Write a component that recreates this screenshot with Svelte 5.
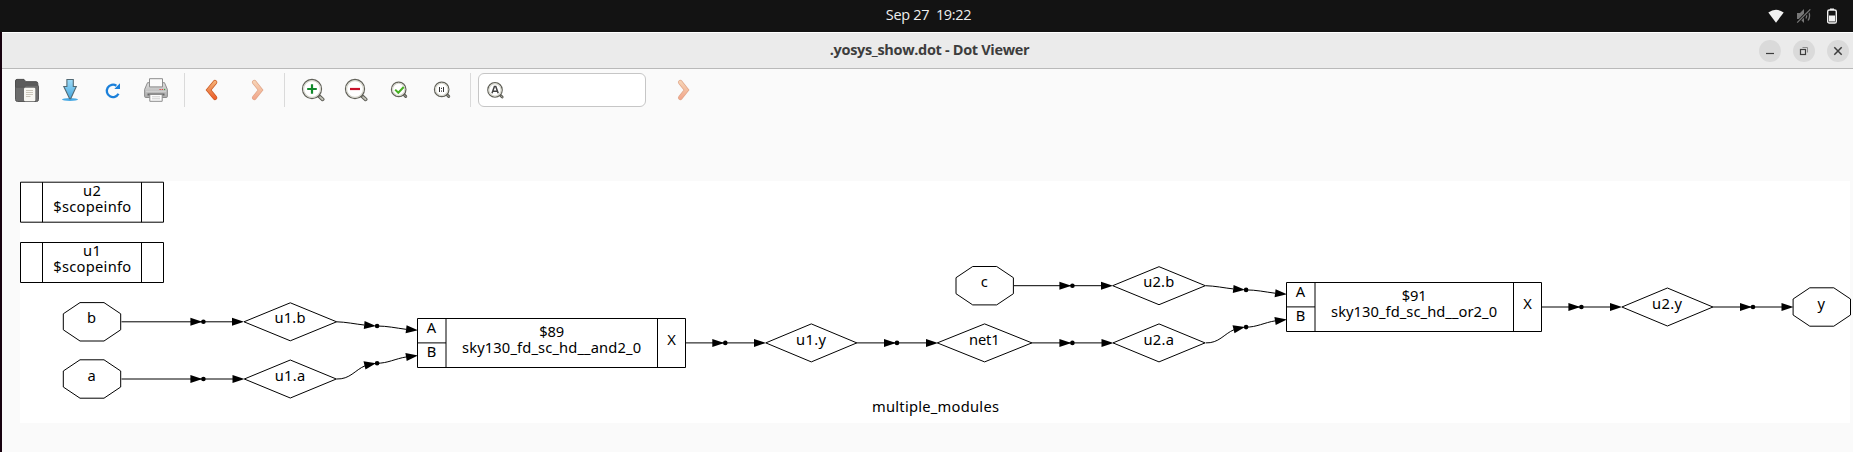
<script>
  const octagons = [
    { x: 92, y: 321.8, label: 'b', base: 323 },
    { x: 92, y: 379, label: 'a', base: 380.5 },
    { x: 984.7, y: 285.7, label: 'c', base: 287 },
    { x: 1821.8, y: 307, label: 'y', base: 309 }
  ];
  const diamonds = [
    { x: 290.3, y: 321.8, w: 46.3, label: 'u1.b', base: 323, len: 31 },
    { x: 290.3, y: 379, w: 46, label: 'u1.a', base: 380.5, len: 30.5 },
    { x: 811.3, y: 342.9, w: 45.5, label: 'u1.y', base: 344.6, len: 30 },
    { x: 984.6, y: 342.9, w: 47.3, label: 'net1', base: 344.6, len: 30.5 },
    { x: 1159, y: 285.7, w: 46.3, label: 'u2.b', base: 287, len: 31 },
    { x: 1159, y: 342.9, w: 46, label: 'u2.a', base: 344.6, len: 30.5 },
    { x: 1667.4, y: 307, w: 45.5, label: 'u2.y', base: 308.8, len: 30 }
  ];
  // start of line, dot centre, arrow tip at the target
  const edges = [
    { y: 321.8, from: 121.5, dot: 203.4, to: 244 },
    { y: 379, from: 121.5, dot: 203.4, to: 244.5 },
    { y: 342.9, from: 685.5, dot: 725.3, to: 766 },
    { y: 342.9, from: 856.5, dot: 897, to: 938 },
    { y: 342.9, from: 1031.5, dot: 1072.4, to: 1113.5 },
    { y: 285.7, from: 1014, dot: 1072.4, to: 1113 },
    { y: 307, from: 1541.5, dot: 1581.4, to: 1622 },
    { y: 307, from: 1712.5, dot: 1753, to: 1793.5 }
  ];
  const cells = [
    { x: 417.5, y: 318.5, right: 685.5, div: 657.5, id: '$89', name: 'sky130_fd_sc_hd__and2_0', len: 179 },
    { x: 1286.5, y: 282.5, right: 1541.5, div: 1513.5, id: '$91', name: 'sky130_fd_sc_hd__or2_0', len: 166 }
  ];
  const scopes = [
    { y: 182.2, h: 40, name: 'u2', b1: 196, b2: 211.5 },
    { y: 242.5, h: 40, name: 'u1', b1: 256, b2: 272 }
  ];
  const fans = [[0, 0], [869, -36.1]];
</script>

{#snippet lens(cx, cy, r, ex, ey, w)}
  <path d="M{cx + r * 0.75} {cy + r * 0.75}L{ex} {ey}" stroke="#5d5d56" stroke-width={w} stroke-linecap="round" />
  <path d="M{cx + r * 0.85} {cy + r * 0.85}L{ex} {ey}" stroke="#c2c2b8" stroke-width={w - 2} stroke-linecap="round" />
  <circle {cx} {cy} {r} fill="#fff" stroke="#62625a" stroke-width="1.3" />
  <circle {cx} {cy} r={r - 1.1} fill="none" stroke="#d5d5cb" stroke-width="1.1" />
{/snippet}

{#snippet chevron(d)}
  <path {d} fill="none" stroke="#c95a24" stroke-width="4.6" stroke-linecap="round" stroke-linejoin="miter" />
  <path {d} fill="none" stroke="url(#amber)" stroke-width="3.2" stroke-linecap="round" />
{/snippet}

<div class="desktop">
  <header class="panel">
    <span></span>
    <span class="clock">Sep 27&nbsp; 19:22</span>
    <div class="status">
      <svg width="16" height="16" viewBox="0 0 16 16"><path d="M.3 4.6Q8-1 15.7 4.6L8 14.7Z" fill="#f2f2f2" /></svg>
      <svg class="mute" width="16" height="16" viewBox="0 0 16 16">
        <path d="M1 5h3l4-4v14L4 11H1Z" fill="#777" />
        <path d="M10 5.5q1.4 2.5 0 5M12.3 3.5q2.7 4.5-.3 9" fill="none" stroke="#777" stroke-width="1.3" />
        <path d="M1 14.8L14.3 1.4" stroke="#131313" stroke-width="3" />
        <path d="M1.2 14.6L14.3 1.4" stroke="#777" stroke-width="1.3" />
      </svg>
      <svg width="10" height="16" viewBox="0 0 10 16">
        <path d="M3 .5h4v1.5H3Z" fill="#f2f2f2" />
        <rect x=".7" y="2" width="8.6" height="13" rx="1.6" fill="none" stroke="#f2f2f2" stroke-width="1.4" />
        <path d="M2 7.5h6V13.5H2Z" fill="#f2f2f2" />
      </svg>
    </div>
  </header>

  <main class="window">
    <div class="titlebar">
      <span></span>
      <span class="title">.yosys_show.dot - Dot Viewer</span>
      <div class="controls">
        <span class="ctl"><svg width="22" height="22"><path d="M7 13.5h8" stroke="#3d3d3d" stroke-width="1.2" /></svg></span>
        <span class="ctl"><svg width="22" height="22" fill="none"><rect x="7.5" y="9.5" width="5" height="5" stroke="#3d3d3d" stroke-width="1.2" /><path d="M9.5 7.5h5v5" stroke="#8c8c8c" /></svg></span>
        <span class="ctl"><svg width="22" height="22"><path d="M7.3 7.3l7.4 7.4M14.7 7.3l-7.4 7.4" stroke="#3d3d3d" stroke-width="1.5" /></svg></span>
      </div>
    </div>

    <div class="toolbar">
      <span class="tool">
        <svg width="24" height="24" viewBox="0 0 24 24">
          <path d="M.5 3Q.5 1.4 2 1.4h7l1.8 2.3H21q1.8 0 1.8 1.8v5H.5Z" fill="#5c5c5c" stroke="#4c4c4c" />
          <path d="M.5 9.2h8.8l1.9-2H22q1.5 0 1.5 1.6V21.5q0 2-2 2h-19q-2 0-2-2Z" fill="#6c6c6c" stroke="#585858" />
          <rect x="9" y="9.8" width="11.3" height="13.5" rx="1.2" fill="#f8f7f2" />
          <path d="M11 12.5h7M11 14.5h7M11 16.5h7M11 18.5h4.5" stroke="#c5c0b3" stroke-width=".9" />
        </svg>
      </span>
      <span class="tool">
        <svg width="24" height="24" viewBox="0 0 24 24">
          <defs><linearGradient id="sky" x2="0" y2="1"><stop stop-color="#9fdcf8" /><stop offset="1" stop-color="#43a6de" /></linearGradient></defs>
          <ellipse cx="12" cy="21.5" rx="8" ry="1.5" fill="#4aaae4" />
          <path d="M8.9 1.5h6.4v7h3l-5.6 12.3h-1.1L5.8 8.5h3.1Z" fill="url(#sky)" stroke="#526a75" stroke-width="1.1" />
        </svg>
      </span>
      <span class="tool">
        <svg width="24" height="24" viewBox="0 0 24 24">
          <path d="M15.4 7.7A6.2 6.2 0 1 0 17.5 15.8" fill="none" stroke="#1b80da" stroke-width="2.3" />
          <path d="M19 5.2V11H13.3Z" fill="#1b80da" />
        </svg>
      </span>
      <span class="tool">
        <svg width="24" height="24" viewBox="0 0 24 24">
          <defs><linearGradient id="shell" x2="0" y2="1"><stop stop-color="#dedede" /><stop offset="1" stop-color="#aaa" /></linearGradient></defs>
          <path d="M3.5 4.7h17l2.9 6.8v6.8q0 1.2-1.2 1.2H1.8q-1.2 0-1.2-1.2V11.5Z" fill="url(#shell)" stroke="#8d8d8d" />
          <path d="M5.5.7h13v8.2h-13Z" fill="#fcfcfc" stroke="#8d8d8d" />
          <path d="M2 13.5h20" stroke="#cfcfcf" />
          <path d="M3.5 16.5h17" stroke="#666" stroke-width="2" />
          <path d="M5.8 16.5h12.4v6.8H5.8Z" fill="#fcfcfc" stroke="#8d8d8d" />
          <path d="M8 18.8h8M8 20.8h8" stroke="#ccc" />
          <path d="M15.5 11.5h1.3M17.7 11.5h1.3" stroke="#e04444" stroke-width="1.2" /><path d="M19.9 11.5h1.3" stroke="#4a9f37" stroke-width="1.2" />
        </svg>
      </span>
      <i class="sep"></i>
      <span class="tool">
        <svg width="24" height="24" viewBox="0 0 24 24">
          <defs><linearGradient id="amber" gradientUnits="userSpaceOnUse" x1="0" y1="2" x2="0" y2="22"><stop stop-color="#f6b77c" /><stop offset=".5" stop-color="#ee8850" /><stop offset="1" stop-color="#ee5725" /></linearGradient></defs>
          {@render chevron('M14 4.3L7.6 12L14 19.7')}
        </svg>
      </span>
      <span class="tool faded"><svg width="24" height="24" viewBox="0 0 24 24">{@render chevron('M10.3 4.3L16.5 12L10.3 19.7')}</svg></span>
      <i class="sep"></i>
      <span class="tool">
        <svg width="24" height="24" viewBox="0 0 24 24">
          {@render lens(11, 11, 9.5, 21.6, 21.3, 3.8)}
          <path d="M11 6.2v9.6M6.2 11h9.6" stroke="#11892b" stroke-width="2.2" />
        </svg>
      </span>
      <span class="tool">
        <svg width="24" height="24" viewBox="0 0 24 24">
          {@render lens(11, 11, 9.5, 21.6, 21.3, 3.8)}
          <path d="M6 11h10" stroke="#c9132b" stroke-width="2.2" />
        </svg>
      </span>
      <span class="tool">
        <svg width="24" height="24" viewBox="0 0 24 24">
          {@render lens(11.7, 11.4, 7.2, 18.7, 18.4, 3)}
          <path d="M8.2 11.6l3.1 3.1L16.7 9" fill="none" stroke="#46b022" stroke-width="2" />
        </svg>
      </span>
      <span class="tool">
        <svg width="24" height="24" viewBox="0 0 24 24">
          {@render lens(11.7, 11.4, 7.2, 18.7, 18.4, 3)}
          <path d="M9.5 9v5M13.5 9v5M11.5 9.8v1.2M11.5 12.5v1.2" stroke="#333" stroke-width="1" />
        </svg>
      </span>
      <i class="sep"></i>
      <div class="entry">
        <svg width="18" height="18" viewBox="0 0 18 18">
          {@render lens(8, 7.9, 7.2, 15.2, 15, 2.8)}
          <path d="M5 11.3L7.4 4.6h1.4l2.4 6.7M6.2 9.2H10" fill="none" stroke="#444" stroke-width="1.5" />
        </svg>
      </div>
      <span class="tool faded next"><svg width="24" height="24" viewBox="0 0 24 24">{@render chevron('M10.3 4.3L16.5 12L10.3 19.7')}</svg></span>
    </div>

    <div class="view">
      <svg class="graph" width="1830" height="242" viewBox="20 181 1830 242">
        <g fill="none" stroke="#000" stroke-width="1">
          {#each scopes as s}
            <path d="M20.5 {s.y}H163.5V{s.y + s.h}H20.5ZM42.5 {s.y}v{s.h}M141.5 {s.y}v{s.h}" />
          {/each}
          {#each octagons as o}
            <path d="M{o.x - 12} {o.y - 19.2}h24l16.7 11.2v16l-16.7 11.2h-24l-16.7 -11.2v-16Z" />
          {/each}
          {#each diamonds as d}
            <path d="M{d.x - d.w} {d.y}L{d.x} {d.y - 19}L{d.x + d.w} {d.y}L{d.x} {d.y + 19}Z" />
          {/each}
          {#each cells as c}
            <path d="M{c.x} {c.y}H{c.right}v49H{c.x}ZM{c.x + 28.5} {c.y}v49M{c.div} {c.y}v49M{c.x} {c.y + 24.4}h28.5" />
          {/each}
        </g>
        {#each edges as e}
          <path d="M{e.from} {e.y}H{e.to - 11}" stroke="#000" />
          <path d="M{e.dot - 13} {e.y - 4}l12 4l-12 4ZM{e.to - 12} {e.y - 4}l12 4l-12 4Z" />
          <circle cx={e.dot} cy={e.y} r="2.3" />
        {/each}
        {#each fans as [dx, dy]}
          <g transform="translate({dx} {dy})">
            <path d="M336.5 321.8C346 322 355 324 364 325M377 326C387 326 396 328 406 329.3M336.5 379C350 379.5 355 370 365 365.8M377 363.2C387 363.5 396 358.5 406 357" fill="none" stroke="#000" />
            <path d="M364.6 321.1L376 325.9L363.8 329ZM406.6 325.3L418 330.3L405.6 333.3ZM363.5 361.3L376 363.2L365.5 369.4ZM405.4 353L418 355.6L406.7 361Z" />
            <circle cx="377.1" cy="326" r="2.3" />
            <circle cx="377.1" cy="363.2" r="2.3" />
          </g>
        {/each}
        <g class="labels">
          {#each scopes as s}
            <text x="92" y={s.b1} textLength="18">{s.name}</text>
            <text x="92.2" y={s.b2} textLength="78">$scopeinfo</text>
          {/each}
          {#each octagons as o}<text x={o.x - 0.5} y={o.base}>{o.label}</text>{/each}
          {#each diamonds as d}<text x={d.x - 0.3} y={d.base} textLength={d.len}>{d.label}</text>{/each}
          {#each cells as c}
            <text x={c.x + 14} y={c.y + 14}>A</text>
            <text x={c.x + 14} y={c.y + 38.2}>B</text>
            <text x={(c.right + c.div) / 2} y={c.y + 26.3}>X</text>
            <text x={(c.x + 28.5 + c.div) / 2} y={c.y + 18} textLength="25">{c.id}</text>
            <text x={(c.x + 28.5 + c.div) / 2 - 0.2} y={c.y + 34} textLength={c.len}>{c.name}</text>
          {/each}
          <text x="935.5" y="411.7" textLength="127">multiple_modules</text>
        </g>
      </svg>
    </div>
  </main>
</div>

<style>
  :global(body) { background: #fafafa; overflow: hidden; }
  .desktop { height: 452px; display: flex; flex-direction: column; background: #17020f; overflow: hidden; }
  .panel, .titlebar { display: grid; grid-template-columns: 1fr auto 1fr; align-items: center; }
  .panel { height: 32px; box-sizing: border-box; padding: 0 16px 0 20px; background: #131313; color: #eee; }
  .clock { font: 14.5px/30px "Open Sans", "Noto Sans", sans-serif; width: 87px; height: 32px; text-align: center; white-space: pre; letter-spacing: -0.35px; }
  .status { display: flex; justify-content: flex-end; gap: 16px; }
  .status .mute { margin-right: -1px; margin-left: -4px; }
  .window { flex: 1; margin-left: 2px; background: #fafafa; display: flex; flex-direction: column; }
  .titlebar { height: 37px; box-sizing: border-box; padding: 0 4px 0 8px; background: #ebebeb; border-top: 1px solid #fff; border-bottom: 1px solid #b9b9b9; }
  .title { font: bold 14.5px/33px "Open Sans", "Noto Sans", sans-serif; height: 35px; color: #3d3d3d; letter-spacing: -0.33px; white-space: nowrap; }
  .controls { display: flex; justify-content: flex-end; gap: 12px; }
  .ctl { width: 22px; height: 22px; border-radius: 50%; background: #dadada; }
  .ctl svg, .tool svg, .status svg, .graph, .entry svg { display: block; }
  .toolbar { height: 42px; padding-left: 3px; display: flex; align-items: center; }
  .tool { padding: 0 9px 0 10px; }
  .faded { opacity: 0.52; }
  .sep { width: 1px; height: 34px; margin: 0 6px 0 7px; background: #dadada; }
  .entry { width: 168px; height: 34px; box-sizing: border-box; margin-left: 1px; padding: 8px 0 0 8px; border: 1px solid #c6c6c6; border-radius: 6px; background: #fff; }
  .next { margin-left: 14px; }
  .view { padding: 70px 0 0 18px; }
  .graph { background: #fff; overflow: visible; }
  .labels text { font-family: "Noto Sans", "Open Sans", sans-serif; font-size: 14.7px; text-anchor: middle; }
</style>
